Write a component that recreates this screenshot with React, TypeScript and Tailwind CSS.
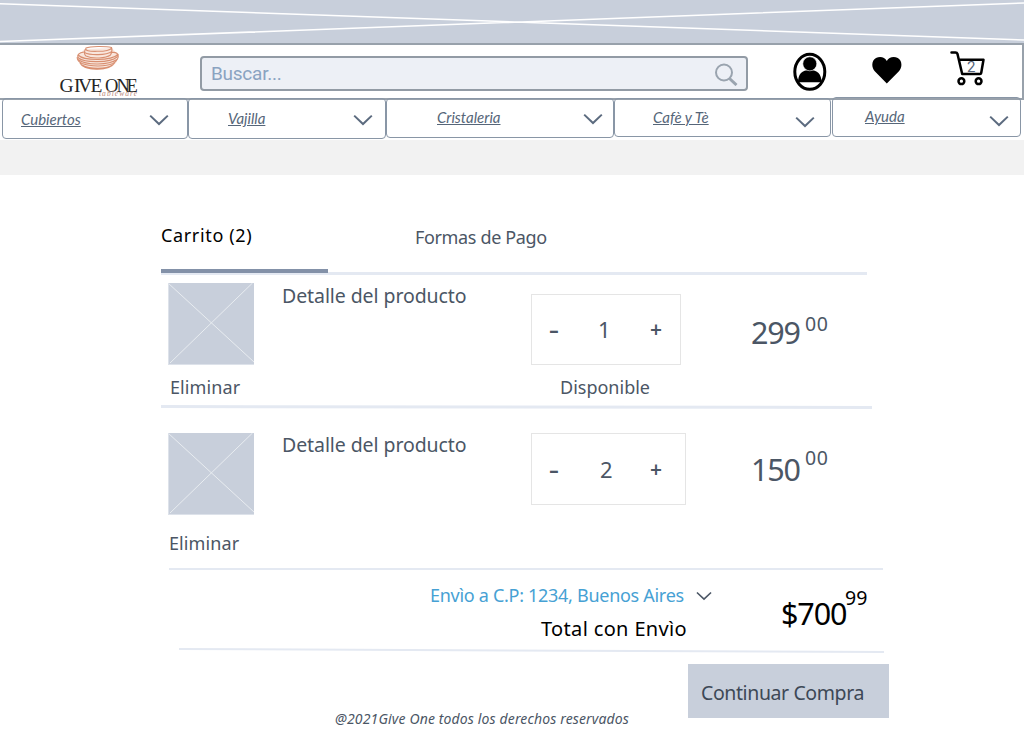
type ChevronProps = { className?: string; width?: number; height?: number };

function Chevron({ className = "", width = 20, height = 12 }: ChevronProps) {
  return (
    <svg className={`shrink-0 ${className}`} width={width} height={height} viewBox="0 0 20 12" fill="none">
      <path d="M1.2 1.6 L10 10 L18.8 1.6" stroke="currentColor" strokeWidth="2" />
    </svg>
  );
}

function Banner() {
  return (
    <svg className="block h-[43px] w-full shrink-0 bg-[#c8cfdb]" viewBox="0 0 1024 43" preserveAspectRatio="none">
      <path d="M0 3.8 L1024 40 M0 41.5 L1024 3" stroke="#fff" strokeWidth="1.5" />
    </svg>
  );
}

function Logo() {
  return (
    <svg className="ml-[56px] h-[53px] w-[90px] shrink-0" viewBox="56 45 90 53">
      <path d="M84.500 49 L112 48 L118 55 C119 66 107 70 98 70 C88 70 77 67 77.500 56 Z" fill="#f9e6dd" />
      <g fill="none" stroke="#d88f71" strokeWidth="1.1">
        <path d="M86 48 C90 46 106 46 111.500 47.500 C112 50 104 51.500 97 51.300 C89 51.500 84.500 50.500 86 48 Z" />
        <path d="M85.500 49 C84 52 83.500 54 86 56 C93 59.500 106 58 110.500 55 C112.500 52 112 49 111.500 47.500" />
        <path d="M84.500 52.500 C90 55.500 106 55.500 112 51.500" />
        <path d="M84 52 C79 52.500 76.500 55 78.500 58 C85 63 110 63 117 57 C119 53.500 116 52 112 52.500" />
        <path d="M78 55 C84 61 111 61 118 54.500" />
        <path d="M77.200 57 C77 60 79 62 82 63.500 C91 67 106 66.500 113 63.500 C117 61 119 58 118 54" />
        <path d="M78 59.500 C87 66 109 65 117 59.500" />
        <path d="M80 63 C84 71 109 71.500 114.500 63 M82 65 C90 69.500 106 69.500 112.500 65" />
      </g>
      <g fill="#262626" fontFamily="Liberation Serif, serif" fontSize="19.5">
        <text x="59.500 74 78 90.500" y="92">GIVE</text>
        <text x="105 116.500 126.500" y="92" fontSize="18.500">ONE</text>
      </g>
      <text x="99" y="95.500" fill="#b98879" fontFamily="Liberation Serif, serif" fontStyle="italic" fontSize="7.500" textLength="38">tableware</text>
    </svg>
  );
}

function Header() {
  return (
    <header className="flex h-[57px] shrink-0 items-start border-y-2 border-r-2 border-[#98a1ab]">
      <Logo />
      <div className="ml-[54px] mt-[11px] flex h-[35px] w-[548px] shrink-0 items-center rounded border-2 border-[#929ba5] bg-[#edf0f6] pl-[9px] pr-[8px]">
        <span className="grow font-['Roboto',sans-serif] text-[19px] leading-[24px] tracking-[-0.25px] text-[#8aa3c1]">Buscar...</span>
        <svg className="shrink-0" width="24" height="24" viewBox="0 0 24 24" fill="none" stroke="#9aa4af">
          <circle cx="10" cy="10.500" r="8" strokeWidth="2" />
          <path d="M15.500 16.500 L22.500 23" strokeWidth="3" />
        </svg>
      </div>
      <svg className="ml-[45px] mt-[7px] h-[40px] w-[34px] shrink-0" viewBox="793 52 34 40">
        <ellipse cx="809.800" cy="71.800" rx="15" ry="17.500" fill="none" stroke="#000" strokeWidth="3" />
        <path d="M798 82.300 C798 74 802 70 809.700 70 C817.500 70 821.500 74 821.500 82.300 Z" />
        <circle cx="809.800" cy="63.800" r="7" stroke="#fff" strokeWidth=".6" />
      </svg>
      <svg className="ml-[45px] mt-[11px] h-[28px] w-[30px] shrink-0" viewBox="872 56 30 28">
        <path d="M886.800 83.500 L875 71.500 C871 67 871.500 60.500 876 58 C880 55.800 884.800 57 886.800 61 C888.800 57 893.800 55.800 897.800 58 C902.200 60.500 902.700 67 898.700 71.500 Z" />
      </svg>
      <div className="relative ml-[47px] mt-[5px] h-[36px] w-[36px] shrink-0">
        <svg className="block h-[36px] w-[36px]" viewBox="949 50 36 36" fill="none" stroke="#000" strokeWidth="2.500" strokeLinejoin="round" strokeLinecap="round">
          <path d="M951.500 52.500 H955.500 Q957 52.500 957.500 54 L962.200 74 H980 Q981 74 981.200 73 L983.500 59.800 H959.500" />
          <circle cx="961.400" cy="81.200" r="2.900" />
          <circle cx="978.600" cy="81.200" r="2.900" />
        </svg>
        <span className="absolute left-[18px] top-[8px] font-['Roboto',sans-serif] text-[15px] leading-[18px] text-[#55637a]">2</span>
      </div>
    </header>
  );
}

const menu = [
  { label: "Cubiertos", box: "ml-[2px] w-[186px] h-[41px] pl-[18px] pr-[18px]", text: "mt-[9px]", arrow: "mt-[15px]" },
  { label: "Vajilla", box: "w-[198px] h-[41px] pl-[39px] pr-[12px]", text: "mt-[8px]", arrow: "mt-[15px]" },
  { label: "Cristaleria", box: "w-[228px] h-[40px] pl-[50px] pr-[10px]", text: "mt-[7px]", arrow: "mt-[14px]" },
  { label: "Cafè y Tè", box: "w-[217px] h-[39px] pl-[38px] pr-[15px]", text: "mt-[7px]", arrow: "mt-[17px]" },
  { label: "Ayuda", box: "ml-px -mt-px w-[189px] h-[40px] pl-[32px] pr-[11px]", text: "mt-[7px]", arrow: "mt-[17px]" },
];

function Menu() {
  return (
    <nav className="-mt-[2px] flex h-[42px] shrink-0 items-start">
      {menu.map((m) => (
        <div key={m.label} className={`flex shrink-0 items-start justify-between rounded border border-[#8996a6] ${m.box}`}>
          <a className={`font-['Lato',sans-serif] text-[15px] italic leading-[22px] text-[#566679] underline ${m.text}`}>{m.label}</a>
          <Chevron className={`text-[#5c6b7f] ${m.arrow}`} />
        </div>
      ))}
    </nav>
  );
}

function Rule({ className, slope = 0, weight = 3 }: { className: string; slope?: number; weight?: number }) {
  return (
    <svg className={`block shrink-0 overflow-visible ${className}`} height={weight} viewBox={`0 0 100 ${weight}`} preserveAspectRatio="none">
      <path d={`M0 ${weight / 2} L100 ${weight / 2 + slope}`} stroke="#e4e9f2" strokeWidth={weight} vectorEffect="non-scaling-stroke" />
    </svg>
  );
}

function Thumb() {
  return (
    <svg className="block h-[82px] w-[86px] bg-[#c8cfdb]" viewBox="0 0 86 82">
      <path d="M0 0 L86 79 M2 80 L84.500 0" stroke="#e8ecf0" strokeWidth="1" />
      <path d="M0 81.500 H86 M.5 0 V82" stroke="#dde2ea" strokeWidth="1" />
    </svg>
  );
}

type ItemProps = {
  row: string;
  thumb: string;
  remove: string;
  title: string;
  box: string;
  qtyText: string;
  qty: string;
  qtyPos: string;
  price: string;
  pricePos: string;
  centsPos: string;
  available?: boolean;
};

function CartItem(p: ItemProps) {
  return (
    <div className={`flex shrink-0 items-start ${p.row}`}>
      <div className={`w-[114px] shrink-0 ${p.thumb}`}>
        <Thumb />
        <div className={`text-[18px] leading-[24px] tracking-[0.1px] ${p.remove}`}>Eliminar</div>
      </div>
      <div className={`w-[249px] shrink-0 text-[19.5px] leading-[24px] tracking-[-0.08px] ${p.title}`}>Detalle del producto</div>
      <div className="w-[220px] shrink-0">
        <div className={`flex items-start border border-[#e5e5e5] text-[22px] leading-[28px] ${p.box}`}>
          <span className={`ml-[17px] w-[48px] font-semibold ${p.qtyText}`}>
            <span className="inline-block origin-left scale-x-140">-</span>
          </span>
          <span className={`w-[53px] ${p.qtyPos} ${p.qtyText}`}>{p.qty}</span>
          <span className={`text-[21px] font-semibold ${p.qtyText}`}>+</span>
        </div>
        {p.available && <div className="ml-[29px] mt-[10px] text-[18px] leading-[24px]">Disponible</div>}
      </div>
      <div className="flex items-start">
        <span className={`w-[54px] text-[30.5px] leading-[36px] tracking-[-1.2px] ${p.pricePos}`}>{p.price}</span>
        <span className={`text-[19.5px] leading-[24px] tracking-[0.5px] ${p.centsPos}`}>00</span>
      </div>
    </div>
  );
}

export default function App() {
  return (
    <div className="flex h-[729px] w-[1024px] flex-col overflow-hidden bg-white font-['Noto_Sans',sans-serif] text-[#4b5665]">
      <Banner />
      <Header />
      <Menu />
      <div className="h-[35px] shrink-0 bg-[#f2f2f2]" />

      <main className="flex grow flex-col">
        <div className="relative z-10 ml-[161px] flex h-[94px] shrink-0 items-start">
          <div className="h-[98px] w-[167px] shrink-0 border-b-4 border-[#8391a8] pt-[48px] text-[18px] leading-[24px] tracking-[0.65px] text-black">Carrito (2)</div>
          <div className="ml-[87px] mt-[50px] text-[18px] leading-[24px] tracking-[-0.35px]">Formas de Pago</div>
        </div>
        <div className="ml-[161px] flex h-[6px] shrink-0 pt-[3px]">
          <div className="h-[3px] w-[706px] bg-[#e4e9f2]" />
        </div>

        <CartItem
          row="ml-[168px] h-[130px]"
          thumb="mt-[8px]"
          remove="ml-[2px] mt-[10px]"
          title="mt-[9px]"
          box="mt-[19px] h-[71px] w-[150px]"
          qtyText="mt-[20px]"
          qty="1"
          qtyPos="pl-px"
          price="299"
          pricePos="mt-[39px]"
          centsPos="mt-[37px]"
          available
        />
        <Rule className="ml-[161px] w-[711px]" slope={1} />
        <CartItem
          row="ml-[168px] h-[160px]"
          thumb="mt-[25px]"
          remove="ml-px mt-[16px]"
          title="mt-[25px]"
          box="mt-[25px] h-[72px] w-[155px]"
          qtyText="mt-[21px]"
          qty="2"
          qtyPos="pl-[3px]"
          price="150"
          pricePos="mt-[43px]"
          centsPos="mt-[38px]"
        />
        <Rule className="ml-[169px] w-[714px]" weight={2} />

        <div className="flex h-[78px] shrink-0 items-start text-black">
          <div className="flex w-[781px] shrink-0 flex-col">
            <div className="ml-[430px] mt-[13px] flex items-start">
              <span className="w-[266px] text-[18px] leading-[24px] tracking-[-0.29px] text-[#46a1d4]">Envìo a C.P: 1234, Buenos Aires</span>
              <Chevron className="mt-[8px] text-[#4b5665]" width={16} height={10} />
            </div>
            <div className="ml-[541px] mt-[10px] text-[20px] leading-[24px] tracking-[0.35px]">Total con Envìo</div>
          </div>
          <span className="mt-[25px] w-[64px] text-[30.5px] leading-[36px] tracking-[-1.1px]">$700</span>
          <span className="mt-[16px] text-[19.5px] leading-[24px]">99</span>
        </div>
        <Rule className="ml-[179px] w-[705px]" slope={3} weight={2} />

        <div className="flex shrink-0 items-start">
          <footer className="ml-[335px] mt-[57px] w-[353px] text-[14px] italic leading-[24px] tracking-[0.14px]">@2021Give One todos los derechos reservados</footer>
          <button className="mt-[14px] h-[54px] w-[201px] bg-[#c8cfdb] pl-[13px] pt-[4px] text-left text-[19.5px] leading-[24px] tracking-[-0.4px] text-[#3d4856]">Continuar Compra</button>
        </div>
      </main>
    </div>
  );
}
